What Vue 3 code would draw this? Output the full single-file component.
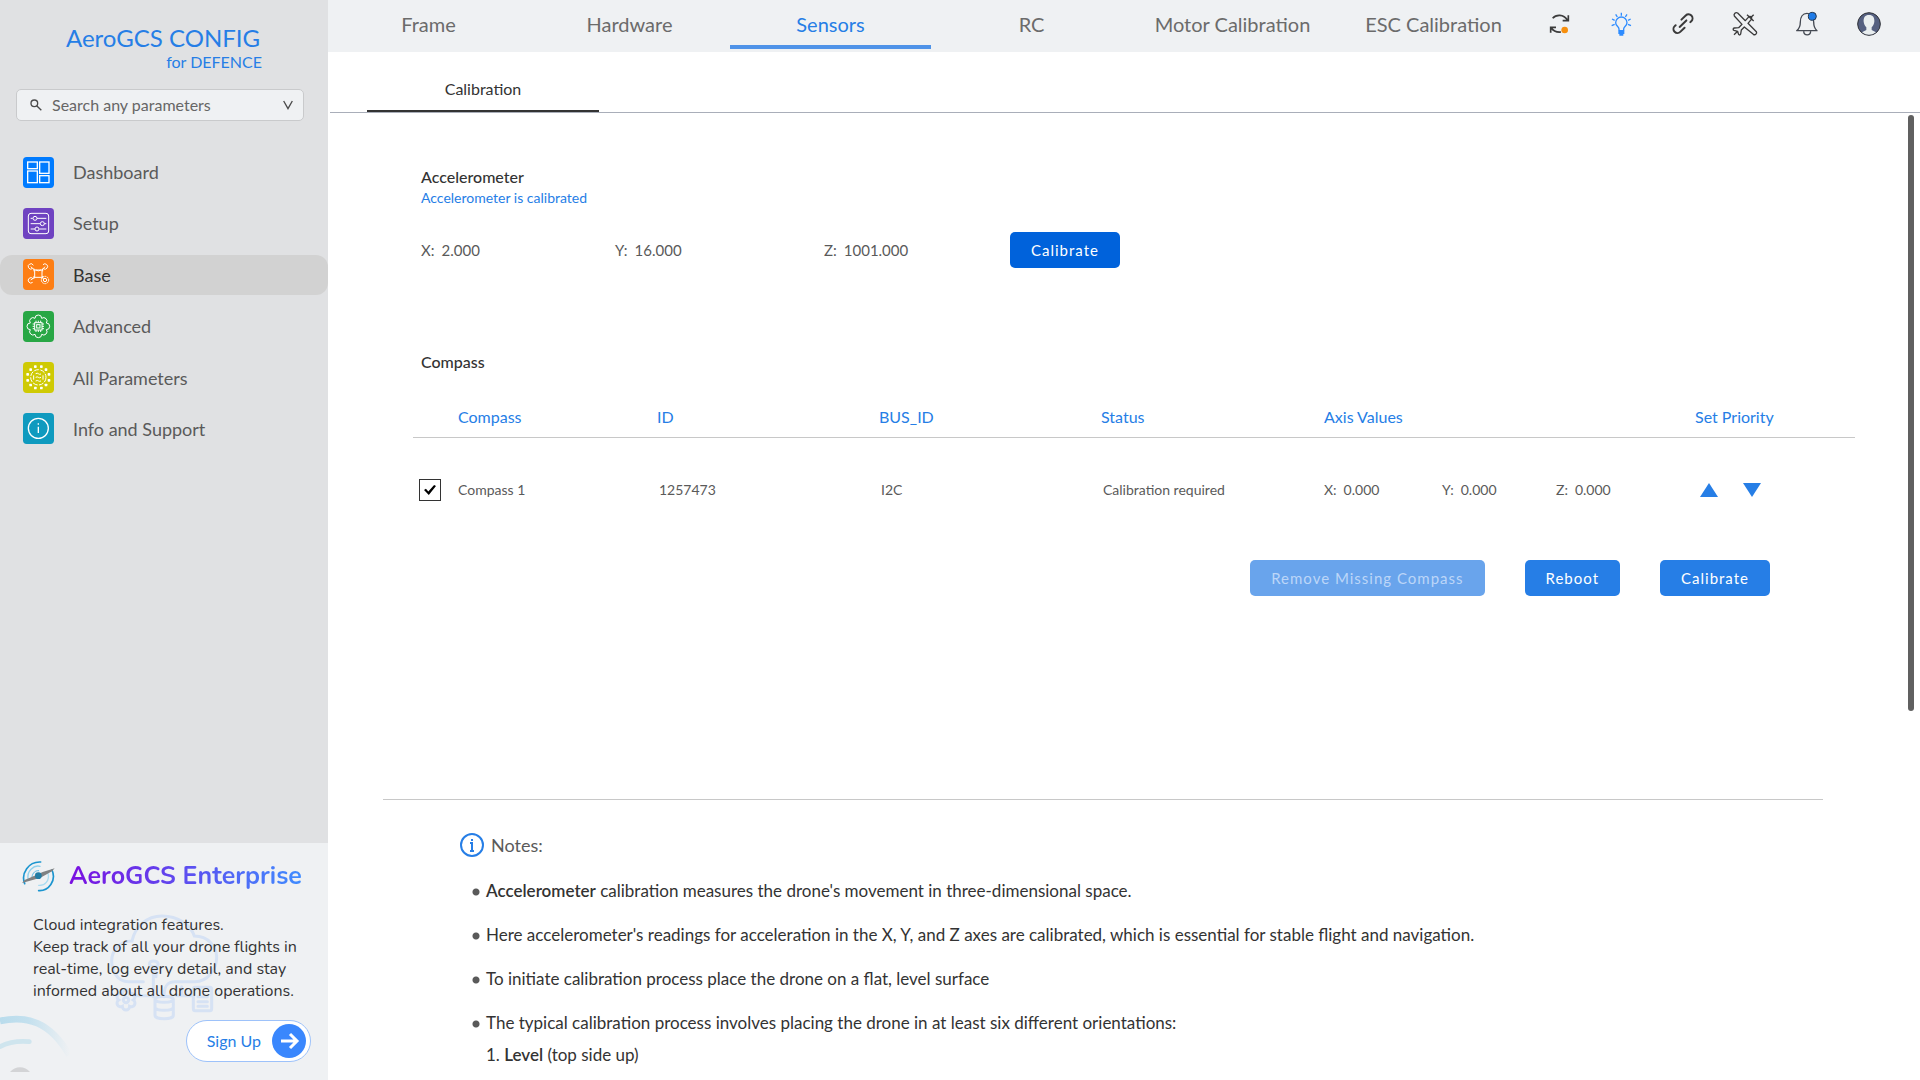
<script setup>
import { ref } from 'vue'

const tabs = ['Frame', 'Hardware', 'Sensors', 'RC', 'Motor Calibration', 'ESC Calibration']
const activeTab = ref('Sensors')

const menu = [
  { id: 'dashboard', label: 'Dashboard', color: '#007bff' },
  { id: 'setup', label: 'Setup', color: '#6f42c1' },
  { id: 'base', label: 'Base', color: '#fd7e14' },
  { id: 'advanced', label: 'Advanced', color: '#28a745' },
  { id: 'params', label: 'All Parameters', color: '#cfca04' },
  { id: 'info', label: 'Info and Support', color: '#0f9abf' }
]
const activeMenu = ref('base')
const query = ref('')

const accel = [
  { axis: 'X', value: '2.000' },
  { axis: 'Y', value: '16.000' },
  { axis: 'Z', value: '1001.000' }
]

const compasses = ref([
  { name: 'Compass 1', id: '1257473', bus: 'I2C', status: 'Calibration required', x: '0.000', y: '0.000', z: '0.000', enabled: true }
])

// n points spread evenly on a circle
const ring = (n, r, cx, cy) =>
  Array.from({ length: n }, (_, i) => {
    const a = ((i + 0.5) / n) * Math.PI * 2 - Math.PI / 2
    return { x: Math.round(cx + Math.cos(a) * r), y: Math.round(cy + Math.sin(a) * r) }
  })

// gear outline: one bulging arc between each pair of neighbouring points
const scallop = (n, r, bulge, cx, cy) => {
  const pts = ring(n, r, cx, cy)
  const last = pts[n - 1]
  return `M${last.x} ${last.y}` + pts.map((p) => `A${bulge} ${bulge} 0 0 1 ${p.x} ${p.y}`).join('') + 'Z'
}
const nodes = ring(12, 33, 46, 46)
const gearPath = scallop(8, 26, 10, 46, 46)
const smallGear = scallop(6, 22, 11, 378, 510)
</script>

<template>
  <div class="app">
    <aside class="sidebar">
      <div class="brand">
        <h1>AeroGCS CONFIG</h1>
        <p>for DEFENCE</p>
      </div>

      <div class="search">
        <svg class="search-icon" viewBox="0 0 36 36" aria-hidden="true">
          <circle cx="13" cy="13" r="10" /><path d="M20 20L34 34" />
        </svg>
        <input v-model="query" type="text" placeholder="Search any parameters" aria-label="Search any parameters" />
        <button type="button" aria-label="Show parameters">
          <svg viewBox="0 0 30 30" aria-hidden="true"><path d="M2 3L15 26L28 3" /></svg>
        </button>
      </div>

      <nav class="menu" aria-label="Main">
        <a v-for="m in menu" :key="m.id" href="#" :class="{ active: m.id === activeMenu }" @click.prevent="activeMenu = m.id">
          <svg viewBox="0 0 93 93" aria-hidden="true">
            <rect class="tile" width="93" height="93" rx="11" :fill="m.color" />
            <g v-if="m.id === 'dashboard'" class="line">
              <rect x="14" y="15" width="29" height="20" /><rect x="50" y="15" width="28" height="34" />
              <rect x="14" y="42" width="29" height="35" /><rect x="50" y="56" width="28" height="21" />
            </g>
            <g v-else-if="m.id === 'setup'" class="line thin">
              <rect x="16" y="16" width="61" height="61" rx="8" />
              <path d="M23 31H29M42 31H70M23 47H51M64 47H70M23 63H36M49 63H70" />
              <circle cx="36" cy="31" r="6" /><circle cx="58" cy="47" r="6" /><circle cx="42" cy="63" r="6" />
            </g>
            <g v-else-if="m.id === 'base'" class="line thin">
              <rect x="35" y="33" width="22" height="22" />
              <path d="M35 33L23 23M57 33L66 23M35 55L23 63M57 55L62 60M33 29V37M59 29V37M33 51V59M59 51V57M38 33Q46 38 54 33" />
              <path d="M28 29A8 8 0 1 1 31 19M61 29A8 8 0 1 0 60 17M30 59A8 8 0 1 0 29 70" />
              <circle cx="66" cy="63" r="5" /><circle cx="66" cy="63" r="11" stroke-dasharray="5 2" />
            </g>
            <g v-else-if="m.id === 'advanced'" class="line thin">
              <path :d="gearPath" />
              <rect x="35" y="35" width="22" height="22" /><rect x="41" y="41" width="10" height="10" />
              <path d="M39 35V29M46 35V29M53 35V29M39 57V63M46 57V63M53 57V63M35 39H29M35 46H29M35 53H29M57 39H63M57 46H63M57 53H63" />
            </g>
            <g v-else-if="m.id === 'params'" class="line thin">
              <circle cx="46" cy="46" r="23" stroke-dasharray="15 4" />
              <path d="M38 35C46 30 46 40 54 36M38 46C46 41 46 51 54 46M38 57C46 52 46 61 54 57M32 40V53M60 40V53" />
              <rect v-for="(n, i) in nodes" :key="i" class="solid" :x="n.x - 4" :y="n.y - 4" width="8" height="8" rx="2" />
            </g>
            <g v-else class="line">
              <circle cx="46" cy="46" r="30" /><path d="M46 41V60M46 31V35" />
            </g>
          </svg>
          <span>{{ m.label }}</span>
        </a>
      </nav>

      <section class="promo">
        <svg class="promo-art" viewBox="0 39 984 711" aria-hidden="true">
          <defs>
            <linearGradient id="fade" gradientUnits="userSpaceOnUse" x1="0" y1="0" x2="210" y2="0">
              <stop offset="0" stop-color="#b9dcec" /><stop offset="0.4" stop-color="#c3e0ee" /><stop offset="1" stop-color="#eff1f3" />
            </linearGradient>
          </defs>
          <g class="cloud">
            <path d="M430 455H385C350 455 335 420 335 393C335 360 362 333 396 333C405 290 440 258 486 258C535 258 572 285 583 318C625 318 650 350 650 382C650 420 622 455 585 455H525C500 455 492 470 492 500" />
            <path d="M460 500V410C445 410 444 393 460 393C478 393 478 410 468 410V440M400 497H455M530 497H580M545 470V497" />
            <path d="M465 508C465 496 520 496 520 508V556C520 570 465 570 465 556ZM465 508C465 520 520 520 520 508M465 532C465 544 520 544 520 532" />
            <rect x="580" y="472" width="55" height="70" rx="6" /><path d="M594 500H622M594 515H622M594 529H622" />
            <circle cx="378" cy="510" r="8" /><path :d="smallGear" />
          </g>
          <path d="M0 573C80 555 150 575 208 675" stroke="url(#fade)" stroke-width="20" />
          <path d="M0 650C30 634 55 632 88 635" stroke="#cfe5ee" stroke-width="14" stroke-linecap="round" />
          <path d="M30 726C45 707 75 707 90 726Z" fill="#d3d4d6" />
        </svg>
        <div class="promo-title">
          <svg viewBox="0 0 99 99" aria-hidden="true">
            <g fill="none" stroke-linecap="round">
              <path d="M8 71C-4 40 20 4 56 6" stroke="#1b95cf" stroke-width="5" />
              <path d="M90 30C104 62 80 94 50 92" stroke="#1b95cf" stroke-width="5" />
              <path d="M19 59C12 34 36 14 54 19" stroke="#8fd0ec" stroke-width="4" />
              <path d="M78 40C84 62 68 78 50 76" stroke="#a9dcf1" stroke-width="4" />
              <path d="M30 50C32 38 40 31 50 32" stroke="#5bb9e2" stroke-width="3" />
            </g>
            <path d="M0 69L8 60L48 43L62 36L98 25L90 34L58 52L40 58Z" fill="#7f8182" />
            <circle cx="49" cy="47" r="10" fill="#217da5" />
          </svg>
          <h2>AeroGCS Enterprise</h2>
        </div>
        <p>Cloud integration features.<br />Keep track of all your drone flights in real-time, log every detail, and stay informed about all drone operations.</p>
        <button type="button" class="signup">
          <span>Sign Up</span>
          <svg viewBox="0 0 34 34" aria-hidden="true">
            <circle cx="17" cy="17" r="17" /><path d="M9 17H25M18 10L25 17L18 24" />
          </svg>
        </button>
      </section>
    </aside>

    <main class="main">
      <header class="topbar">
        <nav class="tabs" aria-label="Configuration">
          <a v-for="t in tabs" :key="t" href="#" :class="{ active: t === activeTab }" @click.prevent="activeTab = t">{{ t }}</a>
        </nav>
        <div class="tools">
          <button type="button" aria-label="Sync">
            <svg viewBox="0 0 84 84">
              <g fill="none" stroke="#3c3c3c" stroke-width="5"><path d="M23 25C33 13 56 12 67 30M70 16V32H53M17 68V52H33M19 54C26 65 37 67 48 66" /></g>
              <circle cx="59" cy="60" r="10" fill="#f78f0d" />
            </svg>
          </button>
          <button type="button" aria-label="Tips">
            <svg viewBox="0 0 84 84">
              <g fill="none" stroke="#2e8cff" stroke-width="4"><path d="M43 8V17M26 13L31 21M60 13L55 21M15 27L23 31M71 27L63 31M14 47L23 43M72 47L63 43" /><path d="M36 61V57C36 49 26 48 26 38A17 17 0 1 1 60 38C60 48 50 49 50 57V61" /></g>
              <path d="M34 60H52V72H49V77H37V72H34Z" fill="#2e8cff" />
            </svg>
          </button>
          <button type="button" aria-label="Connection">
            <svg viewBox="0 0 84 84">
              <g transform="translate(42 41) rotate(-44)" fill="none" stroke="#3a3a3a" stroke-width="6" stroke-linecap="round">
                <path d="M5 -12H23A12 12 0 0 1 23 12H19M-5 12H-23A12 12 0 0 1 -23 -12H-19M-14 0H14" />
              </g>
            </svg>
          </button>
          <button type="button" aria-label="Vehicle">
            <svg viewBox="0 0 84 84">
              <path d="M20 9L43 32L54 20C59 17 65 22 61 28L51 40L76 65C79 70 73 77 67 73L40 51L31 60L29 72C27 76 23 76 22 71L20 64L9 61C5 59 6 55 10 54L23 53L33 43L10 18C7 12 14 5 20 9ZM48 14L68 33M60 22L68 14M9 74L20 64" fill="none" stroke="#3a3a3a" stroke-width="4" stroke-linejoin="round" />
            </svg>
          </button>
          <button type="button" aria-label="Notifications">
            <svg viewBox="0 0 84 84">
              <path d="M11 62H72C64 55 62 47 62 36C62 20 54 10 42 10C29 10 22 21 22 36C22 47 19 56 11 62ZM32 64C33 78 52 78 53 64" fill="none" stroke="#444952" stroke-width="4" stroke-linejoin="round" />
              <circle cx="58" cy="19" r="12" fill="#1f7be6" stroke="#26384e" stroke-width="3" />
            </svg>
          </button>
          <button type="button" aria-label="Account">
            <svg viewBox="0 0 84 84">
              <circle cx="42" cy="42" r="34" fill="#556080" stroke="#2f3136" stroke-width="3" />
              <path d="M42 15C30 15 25 23 26 35C27 43 30 48 34 52V60L21 67Q42 82 63 67L50 60V52C54 48 57 43 58 35C59 23 54 15 42 15Z" fill="#e9eeef" />
            </svg>
          </button>
        </div>
      </header>

      <nav class="subtabs" aria-label="Sensors">
        <a href="#" class="active" @click.prevent>Calibration</a>
      </nav>

      <div class="content">
        <section class="sensor">
          <h2>Accelerometer</h2>
          <p class="state">Accelerometer is calibrated</p>
          <div class="readings">
            <span v-for="a in accel" :key="a.axis" class="reading">{{ a.axis }}:<b>{{ a.value }}</b></span>
            <button type="button" class="btn strong">Calibrate</button>
          </div>
        </section>

        <section class="sensor compass">
          <h2>Compass</h2>
          <table>
            <colgroup>
              <col class="c-check" /><col class="c-name" /><col class="c-id" /><col class="c-id" /><col class="c-status" /><col class="c-axis" /><col class="c-prio" />
            </colgroup>
            <thead>
              <tr>
                <th></th><th>Compass</th><th>ID</th><th>BUS_ID</th><th>Status</th><th>Axis Values</th><th>Set Priority</th>
              </tr>
            </thead>
            <tbody>
              <tr v-for="c in compasses" :key="c.id">
                <td class="check"><input v-model="c.enabled" type="checkbox" :aria-label="c.name" /></td>
                <td class="flush">{{ c.name }}</td>
                <td>{{ c.id }}</td>
                <td>{{ c.bus }}</td>
                <td>{{ c.status }}</td>
                <td class="flush">
                  <div class="axes">
                    <span class="reading">X:<b>{{ c.x }}</b></span>
                    <span class="reading">Y:<b>{{ c.y }}</b></span>
                    <span class="reading">Z:<b>{{ c.z }}</b></span>
                  </div>
                </td>
                <td>
                  <div class="priority">
                    <button type="button" aria-label="Raise priority"><svg viewBox="0 0 18 14"><path d="M9 0L18 14H0Z" /></svg></button>
                    <button type="button" aria-label="Lower priority"><svg viewBox="0 0 18 14"><path d="M9 14L18 0H0Z" /></svg></button>
                  </div>
                </td>
              </tr>
            </tbody>
          </table>
          <div class="actions">
            <button type="button" class="btn" disabled>Remove Missing Compass</button>
            <button type="button" class="btn">Reboot</button>
            <button type="button" class="btn">Calibrate</button>
          </div>
        </section>

        <section class="notes">
          <h3>
            <svg viewBox="0 0 24 24" aria-hidden="true">
              <circle cx="12" cy="12" r="11" /><path d="M10 10H12V18M10 18H14M12 6V8" />
            </svg>
            Notes:
          </h3>
          <ul>
            <li><strong>Accelerometer</strong> calibration measures the drone's movement in three-dimensional space.</li>
            <li>Here accelerometer's readings for acceleration in the X, Y, and Z axes are calibrated, which is essential for stable flight and navigation.</li>
            <li>To initiate calibration process place the drone on a flat, level surface</li>
            <li>The typical calibration process involves placing the drone in at least six different orientations:
              <div class="step">1. <strong>Level</strong> (top side up)</div>
            </li>
          </ul>
        </section>
        <div class="scroll-thumb"></div>
      </div>
    </main>
  </div>
</template>

<style>
body {
  margin: 0;
}
</style>

<style scoped>
.app {
  display: flex;
  height: 100vh;
  overflow: hidden;
  background: #fff;
  color: #5a5a5a;
  font-family: Lato, "Liberation Sans", sans-serif;
  font-size: 16px;
  line-height: 20px;
}
h1, h2, h3, p, ul {
  margin: 0;
  padding: 0;
}
button {
  padding: 0;
  border: 0;
  background: none;
  color: inherit;
  font: inherit;
  cursor: pointer;
}
a {
  color: inherit;
  text-decoration: none;
}
svg {
  display: block;
}

/* sidebar */
.sidebar {
  display: flex;
  flex: none;
  flex-direction: column;
  width: 328px;
  background: #e0e1e3;
}
.brand {
  padding: 24px 66px 0;
  color: #267ee6;
}
.brand h1 {
  font-size: 24px;
  font-weight: 400;
  line-height: 28px;
  white-space: nowrap;
}
.brand p {
  text-align: right;
}
.search {
  display: flex;
  align-items: center;
  height: 30px;
  margin: 17px 24px 0 16px;
  padding: 0 10px 0 13px;
  border: 1px solid #c9cacc;
  border-radius: 5px;
  background: #eff1f3;
}
.search svg {
  fill: none;
  stroke: #4a4a4a;
  stroke-width: 4;
}
.search-icon {
  width: 12px;
  height: 12px;
}
.search input {
  flex: 1;
  min-width: 0;
  padding: 0 0 0 10px;
  border: 0;
  outline: 0;
  background: none;
  color: #5a5a5a;
  font: inherit;
}
.search input::placeholder {
  color: #666;
  opacity: 1;
}
.search button svg {
  width: 10px;
  height: 10px;
}
.menu {
  display: flex;
  flex-direction: column;
  justify-content: space-between;
  height: 297px;
  margin-top: 31px;
}
.menu a {
  display: flex;
  align-items: center;
  gap: 19px;
  height: 40px;
  padding-left: 23px;
  border-radius: 12px;
  font-size: 18px;
}
.menu a.active {
  background: #d2d2d2;
  color: #333;
}
.menu svg {
  width: 31px;
  height: 31px;
}
.line {
  fill: none;
  stroke: #fff;
  stroke-width: 4;
}
.thin {
  stroke-width: 3;
}
.solid {
  fill: #fff;
  stroke: none;
}

/* promo card */
.promo {
  position: relative;
  display: flex;
  flex-direction: column;
  height: 237px;
  margin-top: auto;
  background: #eff1f3;
  color: #333;
  font-family: Nunito, "Open Sans", "Noto Sans", sans-serif;
}
.promo-art {
  position: absolute;
  bottom: 0;
  left: 0;
  width: 328px;
  height: 237px;
  fill: none;
}
.cloud {
  stroke: #d6e2f4;
  stroke-width: 9;
  stroke-linecap: round;
}
.promo-title {
  position: relative;
  display: flex;
  align-items: center;
  gap: 14px;
  padding: 17px 0 0 22px;
}
.promo-title svg {
  width: 33px;
  height: 33px;
}
.promo-title h2 {
  background: linear-gradient(90deg, #7a0fe0, #3f8cff);
  background-clip: text;
  color: transparent;
  font-size: 25px;
  font-weight: 700;
  line-height: 33px;
  white-space: nowrap;
}
.promo p {
  position: relative;
  padding: 21px 28px 0 33px;
  font-size: 16px;
  line-height: 22px;
}
.signup {
  position: relative;
  display: flex;
  align-items: center;
  align-self: flex-end;
  gap: 11px;
  height: 42px;
  margin: 18px 17px 0 0;
  padding: 0 4px 0 20px;
  border: 1px solid #9dc2fa;
  border-radius: 21px;
  background: #fff;
  color: #267ee6;
  font-family: Lato, "Liberation Sans", sans-serif;
}
.signup svg {
  width: 34px;
  height: 34px;
  fill: #3a87fd;
}
.signup path {
  fill: none;
  stroke: #fff;
  stroke-width: 3;
}

/* top bar */
.main {
  display: flex;
  flex: 1;
  flex-direction: column;
  min-width: 0;
}
.topbar {
  display: grid;
  grid-template-columns: minmax(0, 1fr) 386px;
  height: 52px;
  background: #eff1f3;
}
.tabs {
  display: flex;
}
.tabs a {
  box-sizing: border-box;
  flex: 1 1 0;
  height: 49px;
  padding-top: 12px;
  border-bottom: 4px solid transparent;
  color: #6b6b6b;
  font-size: 20px;
  line-height: 24px;
  text-align: center;
  white-space: nowrap;
}
.tabs a.active {
  border-color: #4f93e8;
  color: #267ee6;
}
.tools {
  display: flex;
  justify-content: space-between;
  padding: 10px 37px 0 11px;
}
.tools button, .tools svg {
  width: 28px;
  height: 28px;
}
.subtabs {
  flex: none;
  height: 60px;
  margin-left: 2px;
  padding-left: 37px;
  border-bottom: 1px solid #a9aeb9;
}
.subtabs a {
  display: block;
  box-sizing: border-box;
  width: 232px;
  height: 60px;
  padding-top: 27px;
  border-bottom: 2px solid #333;
  color: #333;
  text-align: center;
}

/* scroll area */
.content {
  position: relative;
  flex: 1;
  min-height: 0;
  overflow: hidden;
}
.scroll-thumb {
  position: absolute;
  top: 2px;
  right: 6px;
  width: 6px;
  height: calc(100% - 371px);
  border-radius: 3px;
  background: #606060;
}
.sensor {
  margin-right: 65px;
  margin-left: 85px;
  padding-top: 54px;
}
.sensor h2 {
  margin-left: 8px;
  color: #333;
  font-size: 16px;
  font-weight: 500;
}
.state {
  margin: 1px 0 0 8px;
  color: #267ee6;
  font-size: 14px;
}
.readings {
  display: grid;
  grid-template-columns: 194px 209px 186px auto;
  align-items: center;
  justify-content: start;
  margin: 24px 0 0 8px;
  font-size: 15px;
}
.reading {
  display: flex;
  gap: 7px;
}
.reading b {
  font-weight: 400;
}
.btn {
  height: 36px;
  padding: 0 21px;
  border-radius: 5px;
  background: #267ee6;
  color: #fff;
  font-size: 15px;
  letter-spacing: 1px;
}
.btn.strong {
  background: #0062db;
}
.btn:disabled {
  background: #69a4ec;
  color: #bcd6f8;
}
.compass {
  padding-top: 84px;
}
table {
  width: 100%;
  margin-top: 25px;
  border-collapse: collapse;
  table-layout: fixed;
}
.c-check { width: 45px; }
.c-name { width: 199px; }
.c-id { width: 222px; }
.c-status { width: 223px; }
.c-axis { width: 371px; }
.c-prio { width: 160px; }
th {
  height: 40px;
  padding: 0;
  border-bottom: 1px solid #c8c8c8;
  color: #267ee6;
  font-weight: 400;
  text-align: left;
}
td {
  height: 104px;
  padding: 0 0 0 2px;
  font-size: 14px;
}
td.check {
  padding-left: 6px;
}
td.flush {
  padding-left: 0;
}
td.check input {
  display: grid;
  box-sizing: border-box;
  place-items: center;
  width: 22px;
  height: 22px;
  margin: 0;
  border: 1px solid #333;
  background: #fff;
  appearance: none;
}
td.check input:checked::after {
  width: 12px;
  height: 10px;
  background: #000;
  clip-path: polygon(0 50%, 16% 38%, 36% 66%, 84% 0, 100% 10%, 40% 100%);
  content: "";
}
.axes {
  display: grid;
  grid-template-columns: 118px 114px auto;
}
.priority {
  display: flex;
  gap: 25px;
  padding-left: 3px;
}
.priority svg {
  width: 18px;
  height: 14px;
  fill: #267ee6;
}
.actions {
  display: flex;
  justify-content: flex-end;
  gap: 40px;
  margin: 18px 85px 0 0;
}

/* notes */
.notes {
  margin: 203px 97px 0 55px;
  padding: 33px 0 0 77px;
  border-top: 1px solid #c8c8c8;
}
.notes h3 {
  display: flex;
  align-items: center;
  gap: 7px;
  font-size: 18px;
  font-weight: 400;
  line-height: 24px;
}
.notes h3 svg {
  width: 24px;
  height: 24px;
  fill: none;
  stroke: #267ee6;
  stroke-width: 2;
}
.notes ul {
  display: flex;
  flex-direction: column;
  gap: 24px;
  margin-top: 24px;
  list-style: none;
}
.notes li {
  padding-left: 26px;
  background: radial-gradient(circle at 16px 11px, #5a5a5a 3px, transparent 4px);
  color: #333;
  font-size: 17px;
}
.notes strong {
  font-weight: 600;
}
.step {
  margin-top: 12px;
}
</style>
